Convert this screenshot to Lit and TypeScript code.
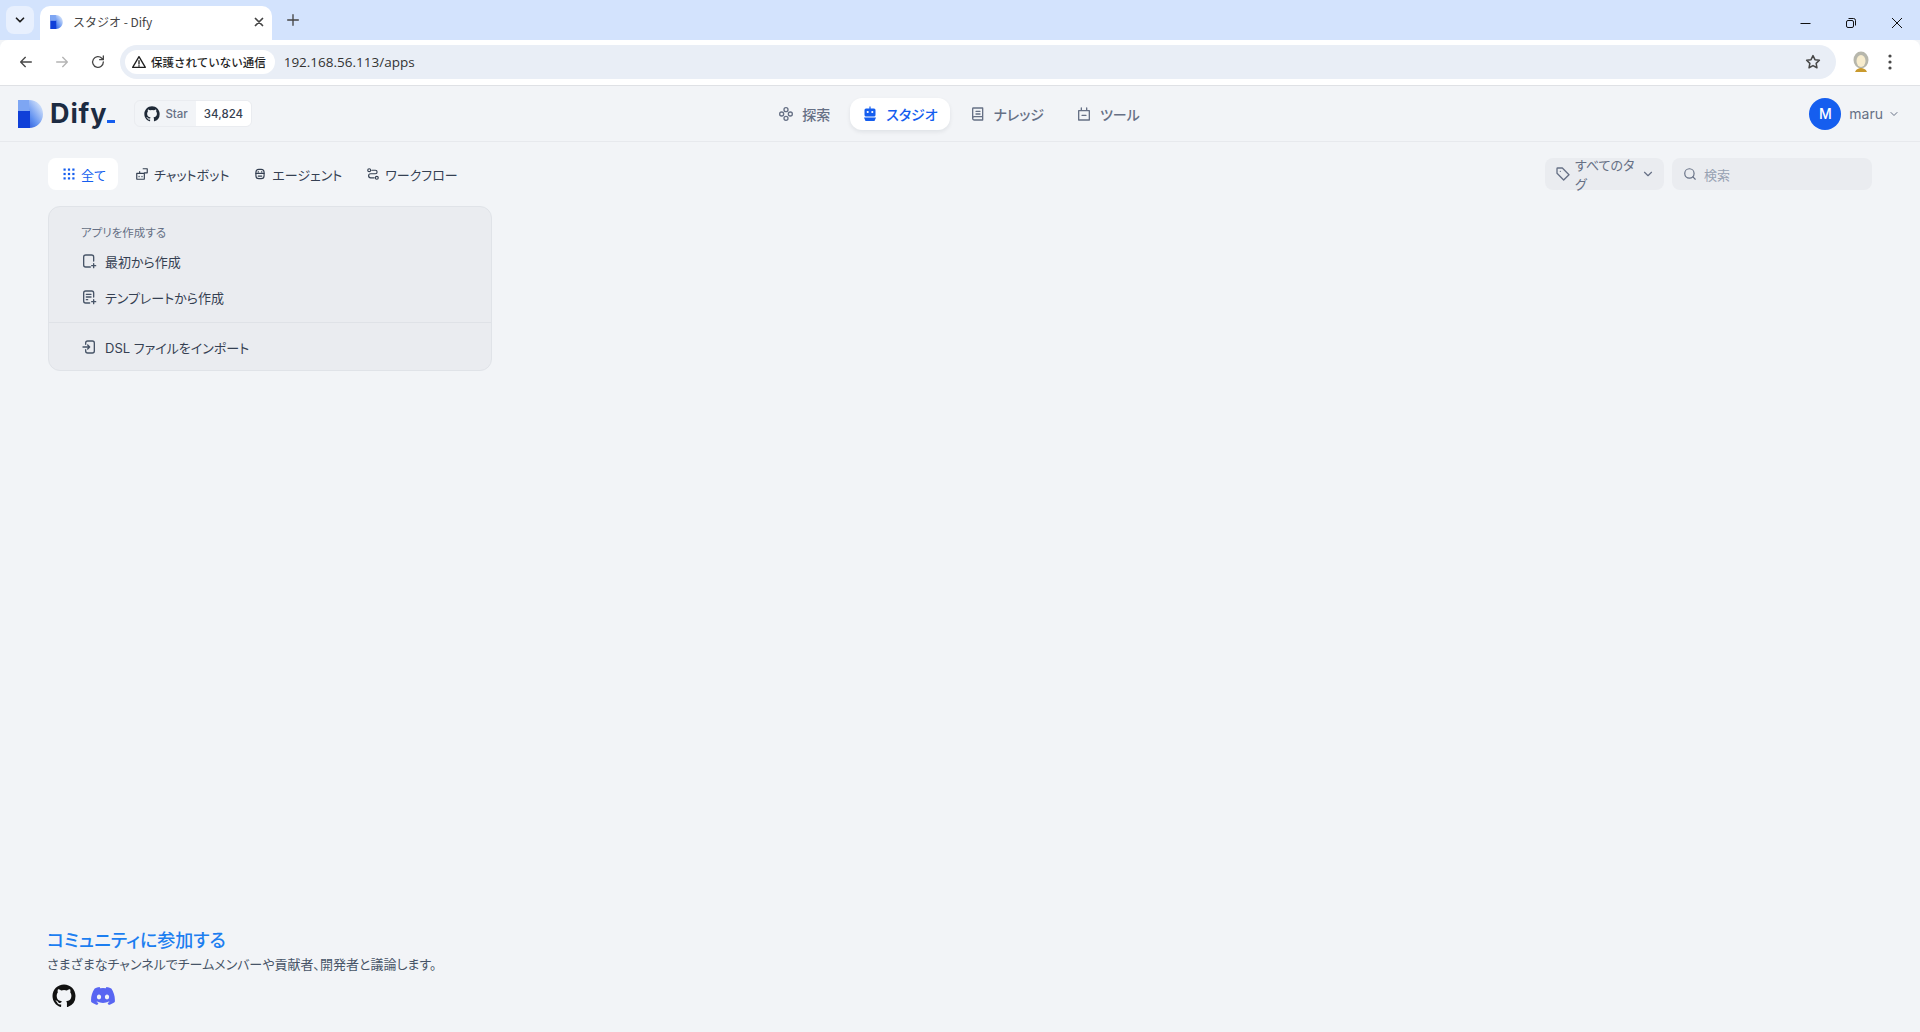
import { LitElement, html, css, svg } from "lit";
import { customElement } from "lit/decorators.js";

const ic = (size: number, body: unknown, extra = "") => html`<svg class="${extra}" width=${size} height=${size} viewBox="0 0 24 24" fill="none" stroke="currentColor" stroke-width="2" stroke-linecap="round" stroke-linejoin="round">${body}</svg>`;

const ghPath = "M12 .5C5.65.5.5 5.65.5 12c0 5.08 3.29 9.39 7.86 10.91.58.1.79-.25.79-.56v-1.96c-3.2.7-3.87-1.54-3.87-1.54-.52-1.33-1.28-1.68-1.28-1.68-1.04-.71.08-.7.08-.7 1.16.08 1.77 1.19 1.77 1.19 1.03 1.76 2.69 1.25 3.35.96.1-.74.4-1.25.73-1.54-2.55-.29-5.24-1.28-5.24-5.69 0-1.26.45-2.28 1.19-3.09-.12-.29-.52-1.46.11-3.05 0 0 .97-.31 3.17 1.18a11 11 0 0 1 5.77 0c2.2-1.49 3.17-1.18 3.17-1.18.63 1.59.23 2.76.11 3.05.74.81 1.19 1.83 1.19 3.09 0 4.42-2.69 5.39-5.25 5.68.41.36.78 1.06.78 2.14v3.17c0 .31.21.67.8.56A11.5 11.5 0 0 0 23.5 12C23.5 5.65 18.35.5 12 .5Z";

const logo = (w: number, h: number, id: string) => html`<svg width=${w} height=${h} viewBox="0 0 25 28">
  <defs><linearGradient id=${id} x1="0" y1="1" x2="1" y2="0.2"><stop offset="0" stop-color="#0b2fc4"/><stop offset="0.5" stop-color="#5d8ef0"/><stop offset="1" stop-color="#dbe8fb"/></linearGradient></defs>
  <path d="M0 0H11C19 0 25 6 25 14S19 28 11 28V11H0Z" fill="url(#${id})"/><path d="M0 11H12V28H0Z" fill="#0f3fd8"/>
  <path d="M0 0H11V11H0Z" fill="#7ea6f3"/></svg>`;

@customElement("app-root")
export class AppRoot extends LitElement {
  static styles = css`
    :host { display: block; min-height: 100vh; }
    * { box-sizing: border-box; }
    .page { display: flex; flex-direction: column; height: 1032px; background: #f2f4f7; font-family: Inter, "Noto Sans CJK JP", sans-serif; font-feature-settings: "palt"; color: #354052; overflow: hidden; }
    svg { display: block; flex: none; }

    .tabbar { height: 40px; background: #d3e3fd; display: flex; align-items: flex-start; padding: 6px 0 0 6px; color: #1f1f1f; }
    .tabs-btn { width: 28px; height: 28px; border-radius: 8px; background: #e8f0fe; display: flex; align-items: center; justify-content: center; margin-right: 6px; }
    .tab { width: 232px; height: 34px; background: #fff; border-radius: 10px 10px 0 0; display: flex; align-items: center; padding: 0 6px 3px 10px; font: 12px "Noto Sans CJK JP", sans-serif; color: #444; position: relative; }
    .tab .title { margin-left: 10px; flex: 1; }
    .plus { width: 28px; height: 28px; margin-left: 7px; display: flex; align-items: center; justify-content: center; color: #444; }
    .win { margin-left: auto; display: flex; height: 34px; align-items: center; color: #111; }
    .win span { width: 46px; display: flex; justify-content: center; margin-top: -1px; }

    .toolbar { height: 46px; background: #fff; border-bottom: 1px solid #dfe1e5; border-radius: 8px 8px 0 0; display: flex; align-items: center; padding: 0 0 1px 8px; color: #474747; margin-top: 0; }
    .nav-btn { width: 36px; display: flex; justify-content: center; }
    .nav-btn.off { color: #b4b4b4; }
    .omni { margin-left: 4px; width: 1716px; height: 34px; border-radius: 17px; background: #e9eef6; display: flex; align-items: center; padding: 0 14px 0 5px; }
    .sec { height: 24px; padding: 0 9px 0 6px; background: #fff; border-radius: 12px; display: flex; align-items: center; gap: 4px; font: 500 11.5px "Noto Sans CJK JP", sans-serif; color: #1f1f1f; }
    .url { margin-left: 9px; font: 13.5px "Open Sans", sans-serif; color: #333; flex: 1; }
    .avatar-pic { margin-left: 16px; }
    .dots { margin-left: 18px; }

    .header { height: 56px; flex: none; border-bottom: 1px solid #e7e9ed; display: grid; grid-template-columns: 1fr auto 1fr; align-items: center; padding: 0 20px 0 18px; }
    .left { display: flex; align-items: center; }
    .wordmark { display: flex; align-items: flex-end; margin-left: 7px; font: 700 27px/32px Inter, sans-serif; color: #1c2b42; letter-spacing: .9px; }
    .wordmark i { display: block; width: 8px; height: 3px; background: #155eef; margin: 0 0 7px 0; }
    .star { margin-left: 19px; height: 27px; display: flex; border: 1px solid #eaecf0; border-radius: 6px; font-size: 11.5px; font-weight: 500; overflow: hidden; }
    .star .a { display: flex; align-items: center; gap: 5px; padding: 0 8px 0 9px; color: #667085; }
    .star .a svg { color: #1f2937; }
    .star .b { display: flex; align-items: center; padding: 0 8px; background: #fff; color: #354052; }
    .nav { display: flex; align-items: center; gap: 8px; }
    .nav a { height: 32px; border-radius: 12px; display: flex; align-items: center; gap: 8px; padding: 0 12px; font-size: 14px; color: #667085; font-weight: 500; }
    .nav a.on { background: #fff; color: #155eef; box-shadow: 0 2px 4px rgba(16,24,40,.08); }
    .user { justify-self: end; display: flex; align-items: center; color: #667085; font-size: 14px; }
    .av { width: 32px; height: 32px; border-radius: 50%; background: #155eef; color: #fff; display: flex; align-items: center; justify-content: center; font-weight: 500; font-size: 14px; margin-right: 8px; }
    .user svg { margin-left: 5px; }

    .main { flex: 1; display: flex; flex-direction: column; padding: 16px 48px 0; }
    .filters { display: flex; justify-content: space-between; height: 32px; }
    .ftabs { display: flex; gap: 0; align-items: center; }
    .ftabs a { height: 32px; display: flex; align-items: center; gap: 5px; padding: 0 12px; border-radius: 8px; font-size: 13px; color: #354052; font-weight: 400; }
    .ftabs a.on { background: #fff; color: #155eef; padding: 0 12px 0 14px; margin-right: 5px; }
    .ftools { display: flex; gap: 8px; }
    .tag { width: 119px; height: 32px; background: #eaecf0; border-radius: 8px; display: flex; align-items: center; padding: 0 9px 0 10px; gap: 4px; font-size: 13px; color: #667085; }
    .tag span { flex: 1; }
    .search { width: 200px; height: 32px; background: #eaecf0; border-radius: 8px; display: flex; align-items: center; padding: 0 11px; gap: 7px; font-size: 13px; color: #98a2b3; }
    .search svg { color: #667085; }

    .card { margin-top: 16px; width: 444px; height: 165px; background: #eaecf0; border: 1px solid #e0e3e8; border-radius: 12px; display: flex; flex-direction: column; }
    .card h4 { margin: 18px 0 0 32px; font-size: 11.5px; line-height: 16px; font-weight: 400; color: #667085; }
    .row { display: flex; align-items: center; gap: 8px; margin-left: 32px; height: 36px; font-size: 13px; color: #354052; }
    .row.first { margin-top: 2px; }
    .sep { height: 1px; background: #dfe2e7; margin-top: 7px; }
    .row.last { margin-top: 6px; }
    .row svg { color: #475467; }

    .foot { margin-top: auto; padding: 0 0 24px 0; margin-left: -1px; }
    .foot h3 { margin: 0; font-size: 18px; line-height: 26px; font-weight: 500; color: #1c7ef0; }
    .foot p { margin: 0; font-size: 13px; line-height: 20px; color: #475467; }
    .social { display: flex; gap: 15px; align-items: center; margin: 10px 0 0 5px; }
  `;

  render() {
    const chev = (s = 12) => ic(s, svg`<path d="M6 9l6 6 6-6"/>`);
    return html`<div class="page">
      <div class="tabbar">
        <div class="tabs-btn">${ic(14, svg`<path d="M6 9l6 6 6-6" stroke-width="3"/>`)}</div>
        <div class="tab">${logo(13, 14, "g1")}<span class="title">スタジオ - Dify</span>
          ${ic(14, svg`<path d="M6 6l12 12M18 6L6 18" stroke-width="3"/>`)}</div>
        <div class="plus">${ic(16, svg`<path d="M12 4v16M4 12h16"/>`)}</div>
        <div class="win">
          <span><svg width="12" height="12" viewBox="0 0 12 12" stroke="currentColor"><path d="M1.500 6.500h10"/></svg></span>
          <span><svg width="12" height="12" viewBox="0 0 12 12" fill="none" stroke="currentColor"><rect x="1.500" y="3.500" width="7" height="7" rx="1.500"/><path d="M3.500 1.500h5a2 2 0 0 1 2 2v5"/></svg></span>
          <span><svg width="12" height="12" viewBox="0 0 12 12" stroke="currentColor"><path d="M1 1l10 10M11 1L1 11"/></svg></span>
        </div>
      </div>
      <div class="toolbar">
        <div class="nav-btn">${ic(16, svg`<path d="M20 12H5M11 5l-7 7 7 7"/>`)}</div>
        <div class="nav-btn off">${ic(16, svg`<path d="M4 12h15M13 5l7 7-7 7"/>`)}</div>
        <div class="nav-btn">${ic(16, svg`<path d="M20 12a8 8 0 1 1-2.300-5.700L20 8.500M20 3v5.500h-5.500"/>`)}</div>
        <div class="omni">
          <div class="sec">${ic(16, svg`<path d="M12 4L2.500 20h19L12 4zM12 10v5M12 17.500v.5"/>`)}保護されていない通信</div>
          <div class="url">192.168.56.113/apps</div>
          ${ic(18, svg`<path d="M12 3.500l2.600 5.400 5.900.8-4.300 4.100 1.100 5.900-5.300-2.900-5.300 2.900 1.100-5.900-4.300-4.100 5.900-.8z"/>`)}
        </div>
        <svg class="avatar-pic" width="18" height="22" viewBox="0 0 18 22"><ellipse cx="9" cy="9" rx="7.500" ry="8.500" fill="#b7b7ac"/><ellipse cx="9" cy="10" rx="4.500" ry="6" fill="#f7eccd"/><path d="M3 21c1-3 4-4 6-4s5 1 6 4z" fill="#c99a2e"/></svg>
        <svg class="dots" width="4" height="16" viewBox="0 0 4 16" fill="#474747"><circle cx="2" cy="2" r="1.600"/><circle cx="2" cy="8" r="1.600"/><circle cx="2" cy="14" r="1.600"/></svg>
      </div>

      <header class="header">
        <div class="left">
          ${logo(25, 28, "g2")}
          <div class="wordmark">Dify<i></i></div>
          <div class="star">
            <div class="a"><svg width="16" height="16" viewBox="0 0 24 24" fill="currentColor"><path d=${ghPath}/></svg>Star</div>
            <div class="b">34,824</div>
          </div>
        </div>
        <nav class="nav">
          <a>${ic(16, svg`<circle cx="12" cy="5.500" r="3"/><circle cx="12" cy="18.500" r="3"/><circle cx="5.500" cy="12" r="3"/><circle cx="18.500" cy="12" r="3"/>`)}探索</a>
          <a class="on"><svg width="16" height="16" viewBox="0 0 16 16" fill="#155eef"><path d="M7.400 .5h1.200v2H12a1.500 1.500 0 0 1 1.500 1.500v5a1.500 1.500 0 0 1-1.500 1.500H4A1.500 1.500 0 0 1 2.500 9V4A1.500 1.500 0 0 1 4 2.500h3.400z"/><path d="M2 11.500h12l-1.500 3.500h-9z"/><circle cx="5.700" cy="6" r="1.100" fill="#fff"/><circle cx="10.300" cy="6" r="1.100" fill="#fff"/></svg>スタジオ</a>
          <a>${ic(16, svg`<path d="M5 3h14v18H6.500A2.500 2.500 0 0 1 4 18.500V4a1 1 0 0 1 1-1zM4 18.500A2.500 2.500 0 0 1 6.500 16H19M9 8h6M9 12h6"/>`)}ナレッジ</a>
          <a>${ic(16, svg`<path d="M4 7h16v14H4zM8 3v4M16 3v4M9 14h6"/>`)}ツール</a>
        </nav>
        <div class="user"><div class="av">M</div>maru${chev(12)}</div>
      </header>

      <main class="main">
        <div class="filters">
          <div class="ftabs">
            <a class="on"><svg width="14" height="14" viewBox="0 0 14 14" fill="#155eef"><rect x="1.500" y="1.500" width="2.200" height="2.200"/><rect x="5.900" y="1.500" width="2.200" height="2.200"/><rect x="10.300" y="1.500" width="2.200" height="2.200"/><rect x="1.500" y="5.900" width="2.200" height="2.200"/><rect x="5.900" y="5.900" width="2.200" height="2.200"/><rect x="10.300" y="5.900" width="2.200" height="2.200"/><rect x="1.500" y="10.300" width="2.200" height="2.200"/><rect x="5.900" y="10.300" width="2.200" height="2.200"/><rect x="10.300" y="10.300" width="2.200" height="2.200"/></svg>全て</a>
            <a>${ic(14, svg`<path d="M3 11h12a1 1 0 0 1 1 1v8a1 1 0 0 1-1 1H4a1 1 0 0 1-1-1zM8 8v3M14 3h7v7h-5M7 16v.5M12 16v.5"/>`)}チャットボット</a>
            <a>${ic(14, svg`<rect x="5" y="4" width="14" height="16" rx="5"/><path d="M5 11h14M9 15.500h6M9 8v.5M15 8v.5"/>`)}エージェント</a>
            <a>${ic(14, svg`<circle cx="5.500" cy="5.500" r="2.500"/><circle cx="18.500" cy="18.500" r="2.500"/><path d="M10 5.500h6a3 3 0 0 1 0 6H8a3 3 0 0 0 0 7h6"/>`)}ワークフロー</a>
          </div>
          <div class="ftools">
            <div class="tag">${ic(16, svg`<path d="M3 4a1 1 0 0 1 1-1h7l10 10-8 8L3 11zM8 8v.01"/>`)}<span>すべてのタグ</span>${chev(14)}</div>
            <div class="search">${ic(14, svg`<circle cx="11" cy="11" r="8"/><path d="M21 21l-4-4"/>`)}検索</div>
          </div>
        </div>

        <section class="card">
          <h4>アプリを作成する</h4>
          <div class="row first">${ic(16, svg`<path d="M19 12V6a3 3 0 0 0-3-3H7a3 3 0 0 0-3 3v12a3 3 0 0 0 3 3h7M19 16v6M16 19h6"/>`)}最初から作成</div>
          <div class="row">${ic(16, svg`<path d="M19 12V6a3 3 0 0 0-3-3H7a3 3 0 0 0-3 3v12a3 3 0 0 0 3 3h6M8 8h7M8 12h7M8 16h2M19 16v6M16 19h6"/>`)}テンプレートから作成</div>
          <div class="sep"></div>
          <div class="row last">${ic(16, svg`<path d="M7 8V6a3 3 0 0 1 3-3h7a3 3 0 0 1 3 3v12a3 3 0 0 1-3 3h-7a3 3 0 0 1-3-3v-2M3 12h10M10 9l3 3-3 3"/>`)}DSL ファイルをインポート</div>
        </section>

        <footer class="foot">
          <h3>コミュニティに参加する</h3>
          <p>さまざまなチャンネルでチームメンバーや貢献者、開発者と議論します。</p>
          <div class="social">
            <svg width="24" height="24" viewBox="0 0 24 24" fill="#111"><path d=${ghPath}/></svg>
            <svg width="24" height="24" viewBox="0 0 24 24" fill="#5865f2"><path d="M20.300 4.400A19.800 19.800 0 0 0 15.400 3l-.6 1.300a18 18 0 0 0-5.600 0L8.600 3a19.700 19.700 0 0 0-4.900 1.400C.6 9-.3 13.500.2 18c2 1.500 4 2.400 6 3l1.300-2.100c-.7-.3-1.400-.6-2-1l.5-.4a14 14 0 0 0 12 0l.5.400c-.6.400-1.300.7-2 1l1.300 2.100c2-.6 4-1.500 6-3 .5-5.200-.9-9.700-3.500-13.600zM8 15.300c-1.200 0-2.100-1.100-2.100-2.400s.9-2.400 2.100-2.400 2.200 1.100 2.100 2.400c0 1.300-.9 2.400-2.100 2.400zm8 0c-1.200 0-2.100-1.100-2.100-2.400s.9-2.400 2.100-2.400 2.200 1.100 2.100 2.400c0 1.300-.9 2.400-2.100 2.400z"/></svg>
          </div>
        </footer>
      </main>
    </div>`;
  }
}
